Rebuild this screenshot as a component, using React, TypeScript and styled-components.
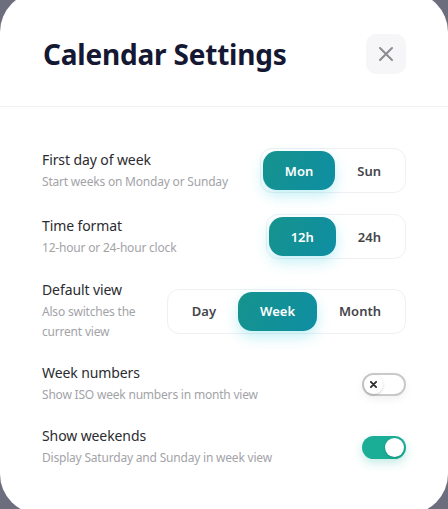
import React, { useState } from "react";
import styled, { createGlobalStyle } from "styled-components";

const Global = createGlobalStyle`
  html, body { margin: 0; padding: 0; }
  body {
    background: #6c6d7d;
    width: 448px;
    height: 509px;
    overflow: hidden;
    font-family: "Noto Sans", "Open Sans", sans-serif;
  }
`;

const Card = styled.div`
  width: 448px;
  height: 522px;
  margin-top: -8px;
  background: #ffffff;
  border-radius: 40px;
  box-sizing: border-box;
  padding-top: 8px;
`;

const Header = styled.header`
  display: flex;
  align-items: center;
  justify-content: space-between;
  padding: 34px 42px 32px 43px;
  border-bottom: 1px solid #f1f1f4;
`;

const Title = styled.h1`
  margin: 0;
  font-size: 28px;
  line-height: 40px;
  font-weight: 700;
  color: #151832;
  letter-spacing: -0.2px;
`;

const CloseButton = styled.button`
  width: 40px;
  height: 40px;
  border: none;
  border-radius: 10px;
  background: #f6f6f8;
  display: flex;
  align-items: center;
  justify-content: center;
  padding: 0;
  cursor: pointer;
`;

const Body = styled.div`
  display: flex;
  flex-direction: column;
  gap: 21px;
  padding: 41px 42px 0 42px;
`;

const Row = styled.div`
  display: flex;
  align-items: center;
  justify-content: space-between;
  gap: 24px;
`;

const TextCol = styled.div`
  display: flex;
  flex-direction: column;
  gap: 2px;
  flex: 1;
  min-width: 0;
`;

const Label = styled.div`
  font-size: 14px;
  line-height: 20px;
  color: #2b2b30;
  letter-spacing: -0.1px;
`;

const Sub = styled.div`
  font-size: 12px;
  line-height: 20px;
  color: #a3a3a8;
  letter-spacing: -0.2px;
`;

const Segmented = styled.div`
  display: flex;
  flex-shrink: 0;
  padding: 2px;
  border: 1px solid #f0f0f3;
  border-radius: 12px;
  background: #fff;
`;

const Segment = styled.button<{ $active?: boolean }>`
  height: 39px;
  padding: 0 22px;
  border: none;
  border-radius: 14px;
  font-family: inherit;
  font-size: 13px;
  font-weight: 600;
  cursor: pointer;
  color: ${(p) => (p.$active ? "#ffffff" : "#45454a")};
  background: ${(p) =>
    p.$active ? "linear-gradient(120deg, #16938d 0%, #0e8ea3 100%)" : "transparent"};
  box-shadow: ${(p) => (p.$active ? "0 6px 14px rgba(40, 200, 220, 0.28)" : "none")};
`;

const Toggle = styled.button<{ $on?: boolean }>`
  position: relative;
  flex-shrink: 0;
  width: 44px;
  height: 23px;
  border-radius: 12px;
  padding: 0;
  cursor: pointer;
  box-sizing: border-box;
  border: ${(p) => (p.$on ? "none" : "2px solid #c9c9cc")};
  background: ${(p) => (p.$on ? "#1aae97" : "#ffffff")};
  box-shadow: ${(p) => (p.$on ? "0 4px 10px rgba(26, 174, 151, 0.25)" : "0 3px 8px rgba(0,0,0,0.06)")};
`;

const Knob = styled.span<{ $on?: boolean }>`
  position: absolute;
  top: ${(p) => (p.$on ? "2px" : "0px")};
  left: ${(p) => (p.$on ? "23px" : "0px")};
  width: 19px;
  height: 19px;
  border-radius: 50%;
  background: #ffffff;
  box-shadow: 0 1px 3px rgba(0, 0, 0, 0.18);
  display: flex;
  align-items: center;
  justify-content: center;
`;

function SegmentedControl({ options, initial }: { options: string[]; initial: string }) {
  const [value, setValue] = useState(initial);
  return (
    <Segmented>
      {options.map((o) => (
        <Segment key={o} $active={o === value} onClick={() => setValue(o)}>
          {o}
        </Segment>
      ))}
    </Segmented>
  );
}

function Switch({ initial }: { initial: boolean }) {
  const [on, setOn] = useState(initial);
  return (
    <Toggle $on={on} onClick={() => setOn(!on)} aria-pressed={on}>
      <Knob $on={on}>
        {!on && (
          <svg width="7" height="7" viewBox="0 0 8 8">
            <path d="M1 1 L7 7 M7 1 L1 7" stroke="#2b2b30" strokeWidth="2" strokeLinecap="round" />
          </svg>
        )}
      </Knob>
    </Toggle>
  );
}

export default function App() {
  return (
    <>
      <Global />
      <Card>
        <Header>
          <Title>Calendar Settings</Title>
          <CloseButton aria-label="Close">
            <svg width="16" height="16" viewBox="0 0 16 16">
              <path d="M2 2 L14 14 M14 2 L2 14" stroke="#8c8c90" strokeWidth="2" strokeLinecap="round" />
            </svg>
          </CloseButton>
        </Header>
        <Body>
          <Row>
            <TextCol>
              <Label>First day of week</Label>
              <Sub>Start weeks on Monday or Sunday</Sub>
            </TextCol>
            <SegmentedControl options={["Mon", "Sun"]} initial="Mon" />
          </Row>
          <Row>
            <TextCol>
              <Label>Time format</Label>
              <Sub>12-hour or 24-hour clock</Sub>
            </TextCol>
            <SegmentedControl options={["12h", "24h"]} initial="12h" />
          </Row>
          <Row>
            <TextCol>
              <Label>Default view</Label>
              <Sub>Also switches the current view</Sub>
            </TextCol>
            <SegmentedControl options={["Day", "Week", "Month"]} initial="Week" />
          </Row>
          <Row>
            <TextCol>
              <Label>Week numbers</Label>
              <Sub>Show ISO week numbers in month view</Sub>
            </TextCol>
            <Switch initial={false} />
          </Row>
          <Row>
            <TextCol>
              <Label>Show weekends</Label>
              <Sub>Display Saturday and Sunday in week view</Sub>
            </TextCol>
            <Switch initial={true} />
          </Row>
        </Body>
      </Card>
    </>
  );
}
